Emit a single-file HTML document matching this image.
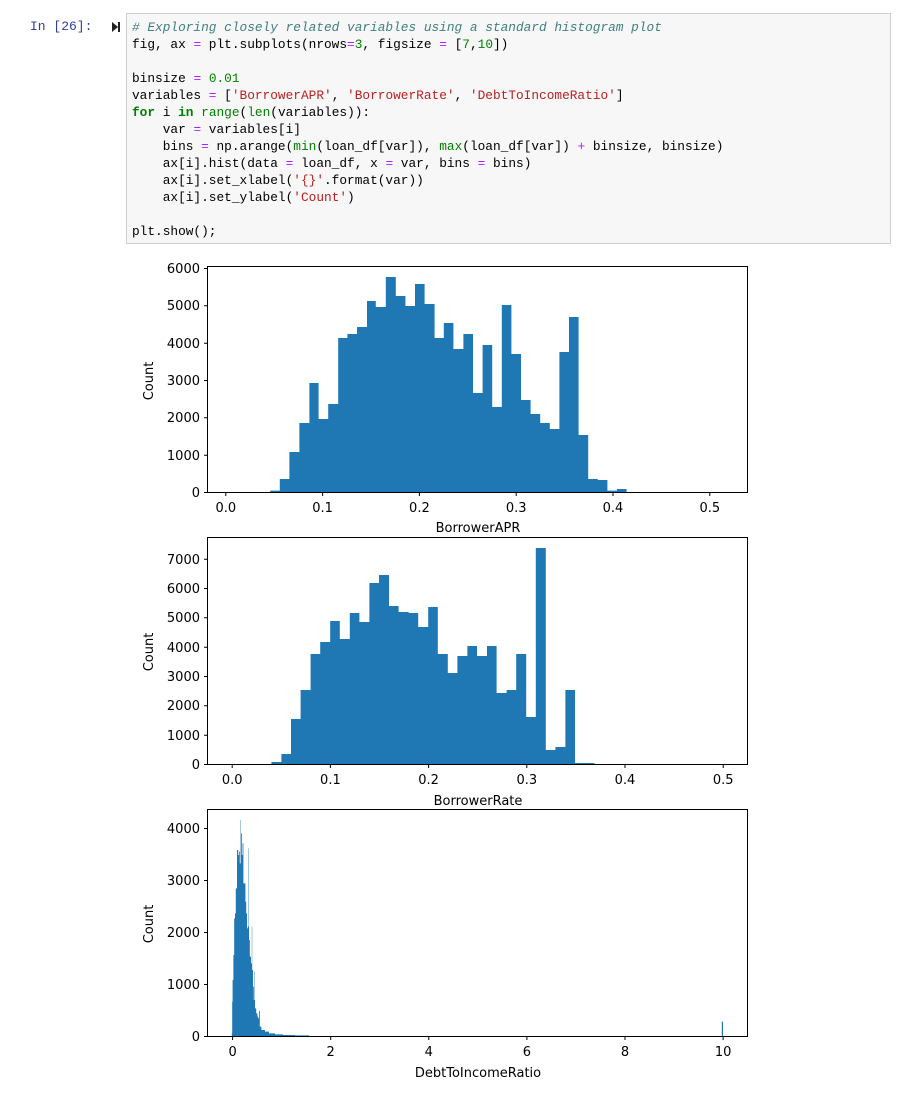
<!DOCTYPE html>
<html><head><meta charset="utf-8">
<style>
html,body{margin:0;padding:0;background:#fff;width:899px;height:1109px;overflow:hidden;position:relative}
.prompt{position:absolute;left:30px;top:18px;font:13px/17px "Liberation Mono",monospace;color:#303F9F}
.cell{position:absolute;left:126px;top:13px;width:765px;height:231px;background:#f7f7f7;border:1px solid #cfcfcf;box-sizing:border-box}
pre{margin:0;position:absolute;left:5px;top:5px;font:12.8px/17px "Liberation Mono",monospace;color:#000}
.c{color:#408080;font-style:italic}.k{color:#008000;font-weight:bold}.b{color:#008000}.s{color:#BA2121}.n{color:#008000}.o{color:#AA22FF}
svg{position:absolute;left:0;top:0}
svg text{font-family:"DejaVu Sans",sans-serif;font-size:13px;fill:#000}
</style></head><body>
<div class="prompt">In [26]:</div>
<svg width="899" height="1109" viewBox="0 0 899 1109">
<path d="M112,22 L112,32 L118,27 Z" fill="#222"/><rect x="118" y="22" width="2" height="10" fill="#222"/>
</svg>
<div class="cell"><pre><span class="c"># Exploring closely related variables using a standard histogram plot</span>
fig, ax <span class="o">=</span> plt.subplots(nrows<span class="o">=</span><span class="n">3</span>, figsize <span class="o">=</span> [<span class="n">7</span>,<span class="n">10</span>])

binsize <span class="o">=</span> <span class="n">0.01</span>
variables <span class="o">=</span> [<span class="s">'BorrowerAPR'</span>, <span class="s">'BorrowerRate'</span>, <span class="s">'DebtToIncomeRatio'</span>]
<span class="k">for</span> i <span class="k">in</span> <span class="b">range</span>(<span class="b">len</span>(variables)):
    var <span class="o">=</span> variables[i]
    bins <span class="o">=</span> np.arange(<span class="b">min</span>(loan_df[var]), <span class="b">max</span>(loan_df[var]) <span class="o">+</span> binsize, binsize)
    ax[i].hist(data <span class="o">=</span> loan_df, x <span class="o">=</span> var, bins <span class="o">=</span> bins)
    ax[i].set_xlabel(<span class="s">'{}'</span>.format(var))
    ax[i].set_ylabel(<span class="s">'Count'</span>)

plt.show();</pre></div>
<svg width="899" height="1109" viewBox="0 0 899 1109">
<g fill="#1f77b4">
<g transform="translate(131,260) scale(0.4,0.33333)">
<path d="M348,697 V692 H372 V657 H396 V576 H421 V489 H446 V369 H469 V477 H493 V432 H518 V234 H541 V222 H565 V201 H590 V123 H612 V141 H637 V51 H662 V108 H686 V138 H710 V72 H734 V132 H759 V234 H782 V189 H806 V267 H831 V222 H855 V399 H879 V255 H903 V441 H927 V135 H951 V282 H975 V420 H999 V462 H1023 V489 H1047 V507 H1071 V276 H1095 V171 H1119 V525 H1143 V657 H1167 V660 H1191 V692 H1215 V687 H1239 V697 Z"/>
</g>
<g transform="translate(131,530) scale(0.4,0.33333)">
<path d="M351,703 V696 H376 V672 H400 V567 H424 V480 H449 V372 H473 V336 H498 V273 H522 V327 H547 V249 H571 V276 H596 V159 H620 V135 H645 V228 H669 V246 H694 V249 H718 V291 H743 V231 H767 V372 H792 V429 H816 V378 H841 V348 H865 V378 H890 V348 H914 V489 H939 V480 H963 V372 H988 V561 H1012 V54 H1037 V660 H1061 V651 H1086 V480 H1110 V699 H1159 V703 Z"/>
</g>
<g transform="translate(131,800) scale(0.4,0.33333)">
<path d="M252,709 V700 H253 V605 H254 V540 H256 V465 H258 V355 H260 V340 H262 V265 H265 V150 H268 V165 H270 V155 H272 V190 H274 V60 H275 V100 H277 V165 H279 V130 H281 V250 H284 V250 H286 V305 H288 V340 H290 V385 H292 V380 H294 V145 H295 V420 H297 V470 H300 V490 H302 V380 H303 V510 H305 V560 H307 V600 H309 V515 H310 V625 H313 V640 H316 V650 H318 V655 H320 V633 H322 V680 H326 V690 H335 V695 H345 V700 H360 V703 H380 V705 H410 V706 H445 V709 Z"/>
<rect x="1477" y="665" width="3" height="44"/>
</g>
</g>
<g fill="none" stroke="#000" stroke-width="1">
<rect x="207.5" y="266.5" width="540" height="226"/>
<rect x="207.5" y="537.5" width="540" height="227"/>
<rect x="207.5" y="809.5" width="540" height="227"/>
<path d="M204,492.5h3.5M204,455.2h3.5M204,417.8h3.5M204,380.5h3.5M204,343.2h3.5M204,305.8h3.5M204,268.5h3.5"/>
<path d="M225.8,492.5v3.5M322.6,492.5v3.5M419.4,492.5v3.5M516.2,492.5v3.5M613,492.5v3.5M709.8,492.5v3.5"/>
<path d="M204,764.5h3.5M204,735.2h3.5M204,705.8h3.5M204,676.5h3.5M204,647.2h3.5M204,617.8h3.5M204,588.5h3.5M204,559.2h3.5"/>
<path d="M232.2,764.5v3.5M330.4,764.5v3.5M428.6,764.5v3.5M526.8,764.5v3.5M625,764.5v3.5M723.2,764.5v3.5"/>
<path d="M204,1036.5h3.5M204,984.5h3.5M204,932.5h3.5M204,880.5h3.5M204,828.5h3.5"/>
<path d="M232.6,1036.5v3.5M330.7,1036.5v3.5M428.8,1036.5v3.5M526.9,1036.5v3.5M625,1036.5v3.5M723.1,1036.5v3.5"/>
</g>
<g text-anchor="end">
<text x="200" y="497">0</text><text x="200" y="460">1000</text><text x="200" y="422">2000</text><text x="200" y="385">3000</text><text x="200" y="348">4000</text><text x="200" y="310">5000</text><text x="200" y="273">6000</text>
<text x="200" y="769">0</text><text x="200" y="740">1000</text><text x="200" y="710">2000</text><text x="200" y="681">3000</text><text x="200" y="652">4000</text><text x="200" y="622">5000</text><text x="200" y="593">6000</text><text x="200" y="564">7000</text>
<text x="200" y="1041">0</text><text x="200" y="989">1000</text><text x="200" y="937">2000</text><text x="200" y="885">3000</text><text x="200" y="833">4000</text>
</g>
<g text-anchor="middle">
<text x="225.8" y="512">0.0</text><text x="322.6" y="512">0.1</text><text x="419.4" y="512">0.2</text><text x="516.2" y="512">0.3</text><text x="613" y="512">0.4</text><text x="709.8" y="512">0.5</text>
<text x="478" y="532">BorrowerAPR</text>
<text x="232.2" y="784">0.0</text><text x="330.4" y="784">0.1</text><text x="428.6" y="784">0.2</text><text x="526.8" y="784">0.3</text><text x="625" y="784">0.4</text><text x="723.2" y="784">0.5</text>
<text x="478" y="805">BorrowerRate</text>
<text x="232.6" y="1056">0</text><text x="330.7" y="1056">2</text><text x="428.8" y="1056">4</text><text x="526.9" y="1056">6</text><text x="625" y="1056">8</text><text x="723.1" y="1056">10</text>
<text x="478" y="1077">DebtToIncomeRatio</text>
<text transform="translate(153,381) rotate(-90)">Count</text>
<text transform="translate(153,652) rotate(-90)">Count</text>
<text transform="translate(153,924) rotate(-90)">Count</text>
</g>
</svg>
</body></html>
